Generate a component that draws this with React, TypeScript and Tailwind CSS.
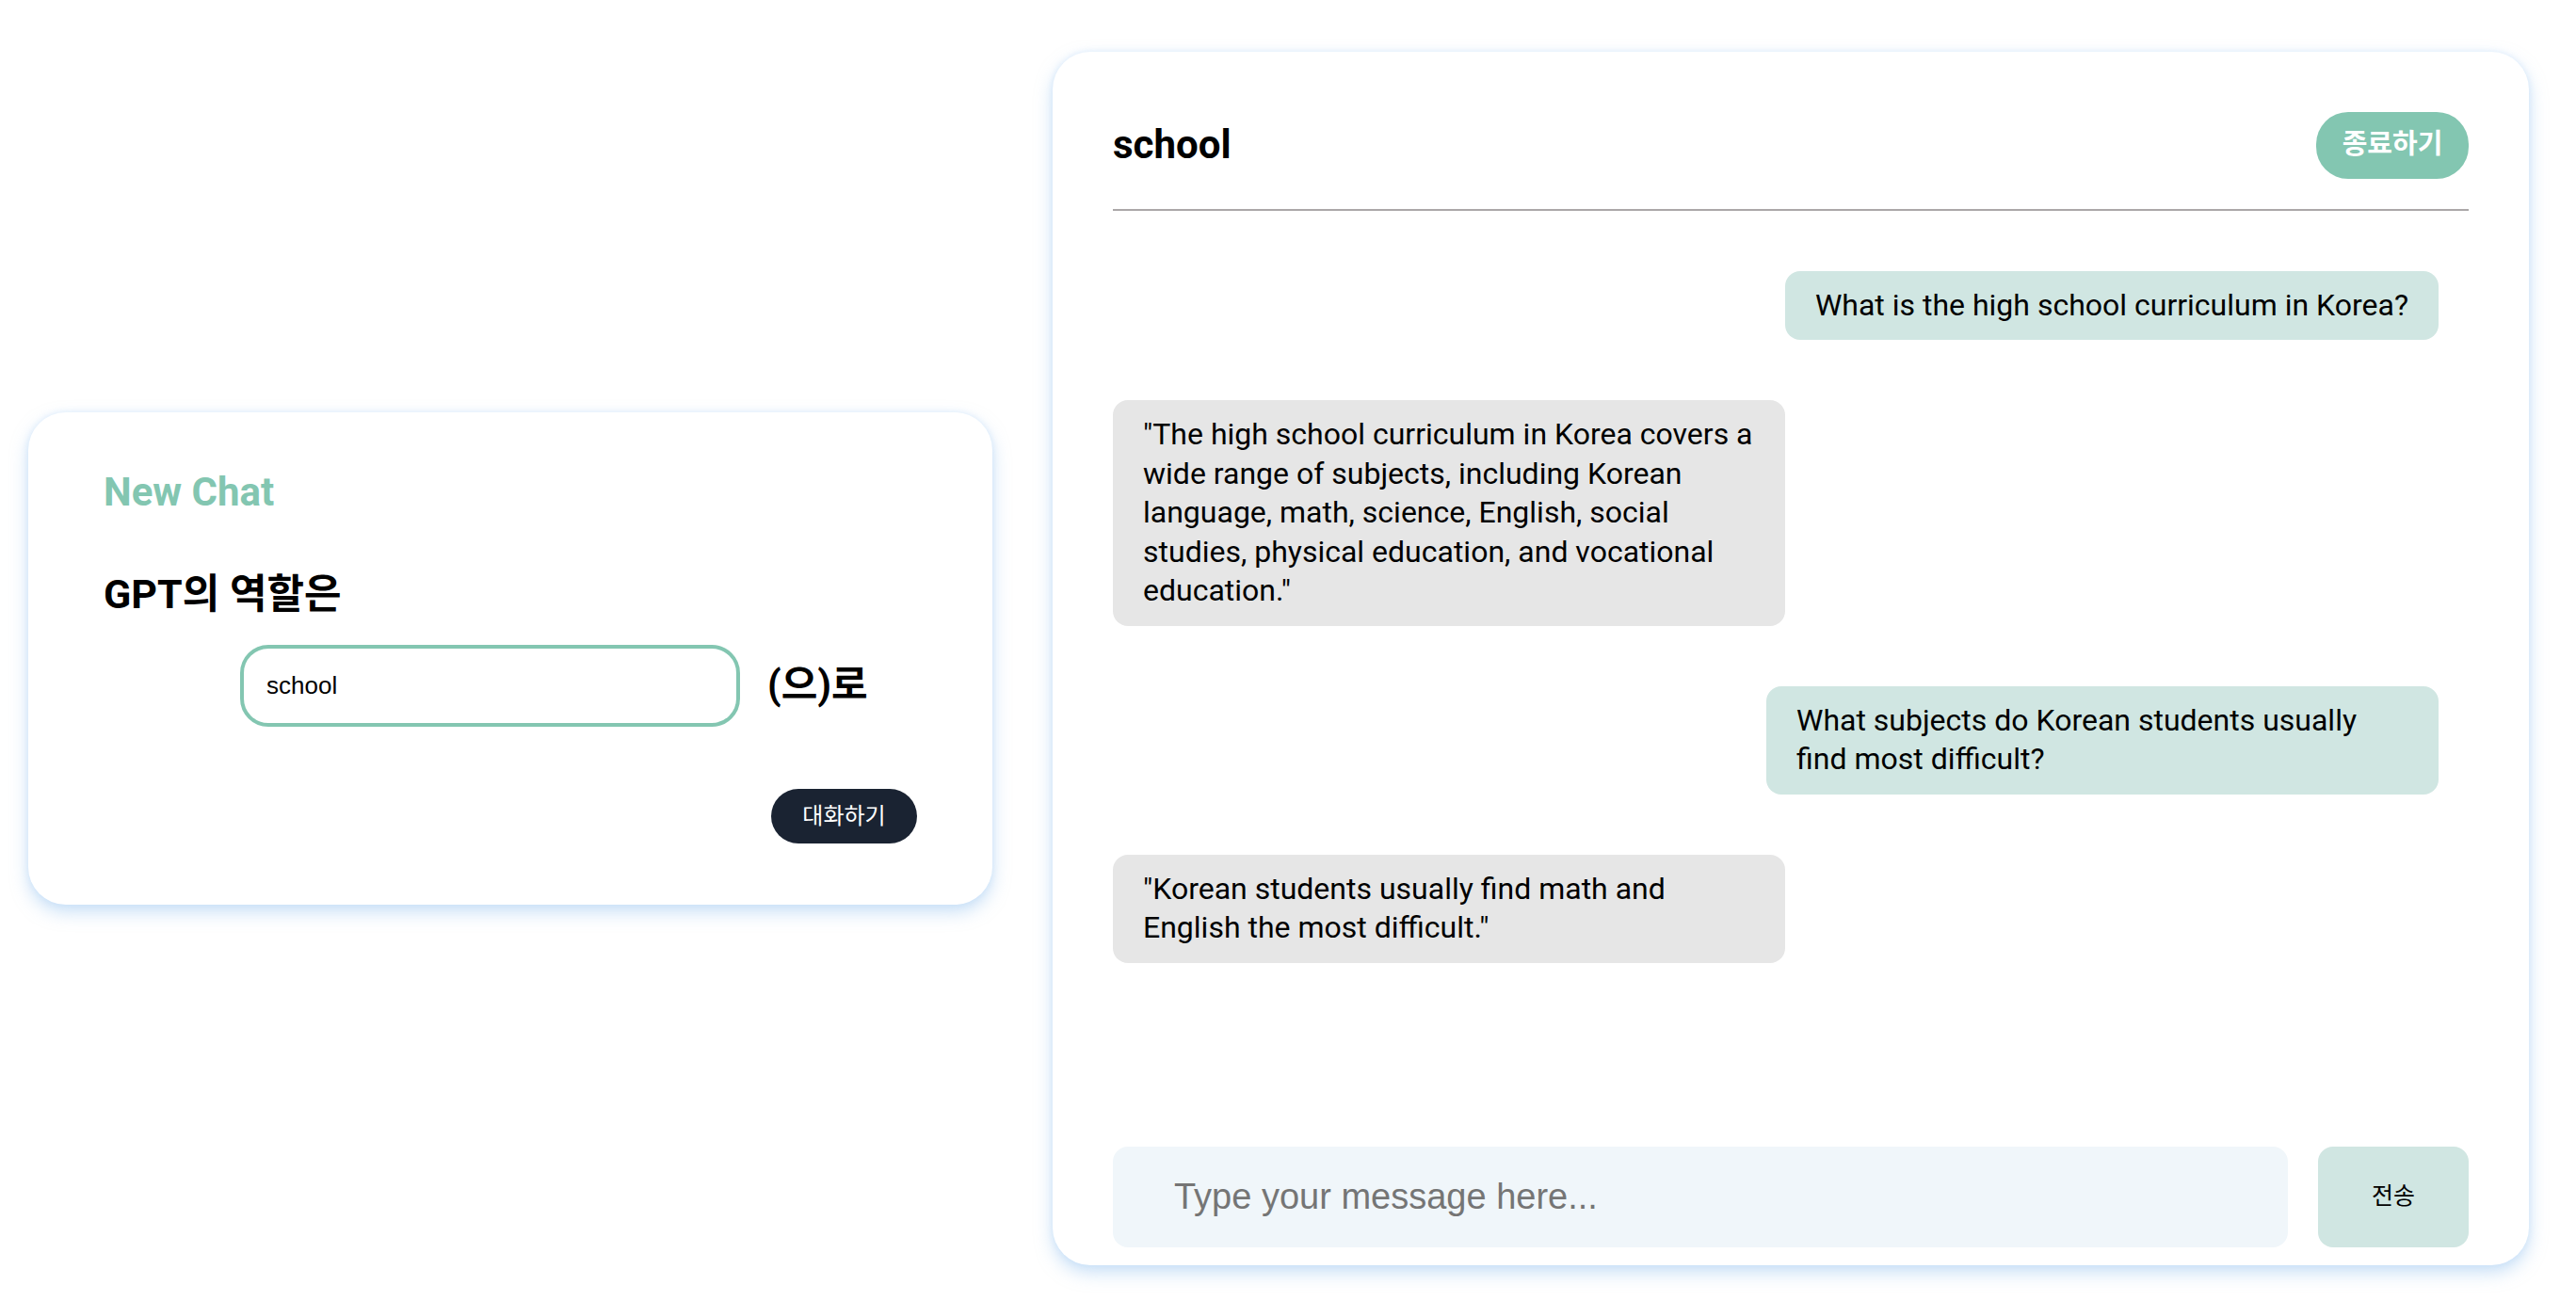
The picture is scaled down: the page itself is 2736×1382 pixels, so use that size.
import React from "react";

const KR = "font-['Roboto','Noto_Sans_CJK_KR',sans-serif]";

function Bubble({ text, user }: { text: string; user?: boolean }) {
  return (
    <div className={user ? "flex justify-end" : "flex justify-start"}>
      <div
        className={`max-w-[714px] rounded-[16px] px-[32px] py-[16px] text-[32px] leading-[41.5px] text-black ${
          user ? "bg-[#d0e6e2]" : "bg-[#e6e6e6]"
        }`}
      >
        {text}
      </div>
    </div>
  );
}

export default function App() {
  return (
    <div className={`flex h-[1382px] w-full items-center bg-white pl-[30px] pt-[16px] ${KR}`}>
      {/* Left card */}
      <div className="flex h-[523px] w-[1024px] shrink-0 flex-col rounded-[40px] bg-white px-[80px] pt-[61px] pb-[64px] shadow-[0_0_6px_rgba(190,220,250,0.45),0_8px_18px_rgba(150,195,240,0.5)]">
        <h2 className="text-[42px] font-bold leading-[48px] text-[#83c6b1]">New Chat</h2>
        <div className="mt-[60px] text-[43px] font-bold leading-[48px] text-black">GPT의 역할은</div>
        <div className="mt-[30px] ml-[145px] flex items-center gap-[29px]">
          <input
            defaultValue="school"
            className="h-[87px] w-[531px] rounded-[30px] border-[4px] border-[#83c6b1] bg-white pl-[24px] font-['Liberation_Sans',Arial,sans-serif] text-[26px] text-black outline-none"
          />
          <span className="text-[42px] font-bold leading-[48px] text-black">(으)로</span>
        </div>
        <div className="mt-[66px] flex justify-end">
          <button className="flex h-[58px] w-[155px] items-center justify-center rounded-full bg-[#1a2332] text-[24px] text-white">
            대화하기
          </button>
        </div>
      </div>

      {/* Right card */}
      <div className="ml-[64px] flex h-[1289px] w-[1568px] shrink-0 flex-col rounded-[40px] bg-white px-[64px] pt-[64px] pb-[19px] shadow-[0_0_6px_rgba(190,220,250,0.45),0_8px_18px_rgba(150,195,240,0.5)]">
        <div className="flex items-center justify-between border-b-[2px] border-[#aba7a8] pb-[32px]">
          <h2 className="text-[42px] font-bold leading-[48px] text-black">school</h2>
          <button className="flex h-[71px] w-[162px] items-center justify-center rounded-[34px] bg-[#83c6b1] text-[29px] font-bold text-white">
            종료하기
          </button>
        </div>

        <div className="flex flex-1 flex-col gap-[64px] overflow-hidden pt-[64px] pr-[32px]">
          <Bubble user text="What is the high school curriculum in Korea?" />
          <Bubble text={'"The high school curriculum in Korea covers a wide range of subjects, including Korean language, math, science, English, social studies, physical education, and vocational education."'} />
          <Bubble user text="What subjects do Korean students usually find most difficult?" />
          <Bubble text={'"Korean students usually find math and English the most difficult."'} />
        </div>

        <div className="flex gap-[32px]">
          <input
            placeholder="Type your message here..."
            className="h-[107px] flex-1 rounded-[16px] bg-[#f0f6fa] pl-[65px] font-['Liberation_Sans',Arial,sans-serif] text-[38px] text-black outline-none placeholder:text-[#757575]"
          />
          <button className="flex h-[107px] w-[160px] items-center justify-center rounded-[16px] bg-[#d0e6e2] text-[25px] text-black">
            전송
          </button>
        </div>
      </div>
    </div>
  );
}
